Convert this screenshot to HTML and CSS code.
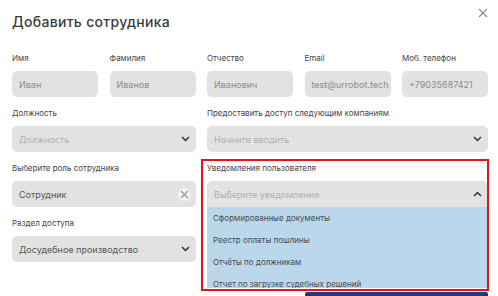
FILE: index.html
```html
<!DOCTYPE html>
<html lang="ru">
<head>
    <meta charset="UTF-8">
    <meta name="viewport" content="width=device-width, initial-scale=1.0">
    <link rel="stylesheet" href="styles.css">
    <title>Добавить сотрудника</title>
</head>
<body>
  <div class="modal">
    <div class="modal-header">
      <h1 class="modal-title">Добавить сотрудника</h1>
      <button class="close-btn" aria-label="Закрыть">
        <svg width="10" height="10" viewBox="0 0 10 10"><path d="M1 1L9 9M9 1L1 9" stroke="#8a8a8a" stroke-width="1.1" fill="none"/></svg>
      </button>
    </div>

    <form class="form-grid">
      <div class="field">
        <label class="field-label">Имя</label>
        <div class="control"><span class="value">Иван</span></div>
      </div>
      <div class="field">
        <label class="field-label">Фамилия</label>
        <div class="control"><span class="value">Иванов</span></div>
      </div>
      <div class="field">
        <label class="field-label">Отчество</label>
        <div class="control"><span class="value">Иванович</span></div>
      </div>
      <div class="field">
        <label class="field-label">Email</label>
        <div class="control"><span class="value">test@urrobot.tech</span></div>
      </div>
      <div class="field">
        <label class="field-label">Моб. телефон</label>
        <div class="control"><span class="value">+79035687421</span></div>
      </div>

      <div class="field span-2">
        <label class="field-label">Должность</label>
        <div class="control select"><span class="placeholder">Должность</span>
          <svg class="chevron" width="9" height="6" viewBox="0 0 9 6"><path d="M1 1L4.5 4.5L8 1" stroke="#333" stroke-width="1.5" fill="none"/></svg>
        </div>
      </div>
      <div class="field span-3">
        <label class="field-label">Предоставить доступ следующим компаниям</label>
        <div class="control select"><span class="placeholder">Начните вводить</span>
          <svg class="chevron" width="9" height="6" viewBox="0 0 9 6"><path d="M1 1L4.5 4.5L8 1" stroke="#333" stroke-width="1.5" fill="none"/></svg>
        </div>
      </div>

      <div class="field span-2">
        <label class="field-label">Выберите роль сотрудника</label>
        <div class="control select"><span class="selected">Сотрудник</span>
          <span class="clear-btn">
            <svg width="9" height="9" viewBox="0 0 9 9"><path d="M1 1L8 8M8 1L1 8" stroke="#9a9a9a" stroke-width="1.2" fill="none"/></svg>
          </span>
        </div>
      </div>
      <div class="field span-3 highlighted">
        <label class="field-label">Уведомления пользователя</label>
        <div class="control select open"><span class="placeholder">Выберите уведомления</span>
          <svg class="chevron" width="9" height="6" viewBox="0 0 9 6"><path d="M1 5L4.5 1.5L8 5" stroke="#333" stroke-width="1.5" fill="none"/></svg>
          <ul class="dropdown">
            <li>Сформированные документы</li>
            <li>Реестр оплаты пошлины</li>
            <li>Отчёты по должникам</li>
            <li>Отчет по загрузке судебных решений</li>
          </ul>
        </div>
      </div>

      <div class="field span-2">
        <label class="field-label">Раздел доступа</label>
        <div class="control select"><span class="selected">Досудебное производство</span>
          <svg class="chevron" width="9" height="6" viewBox="0 0 9 6"><path d="M1 1L4.5 4.5L8 1" stroke="#333" stroke-width="1.5" fill="none"/></svg>
        </div>
      </div>

      <!-- save button, only its top edge is in view -->
      <button type="button" class="save-btn" aria-label="Сохранить"></button>
    </form>
  </div>
</body>
</html>
```

FILE: styles.css
```css
html, body {
    height: 296px;
    overflow: hidden;
}

body {
    margin: 0;
    padding: 0;
    font-family: Inter, "Noto Sans", sans-serif;
    background-color: #fff;
    color: #333;
}

.modal {
    padding: 12px 10px 0 12px;
}

.modal-header {
    display: flex;
    justify-content: space-between;
    align-items: flex-start;
    margin-bottom: 21px;
}

.modal-title {
    margin: 0;
    font-size: 14px;
    line-height: 20px;
    font-weight: 500;
    letter-spacing: 0.3px;
    color: #3a3a3a;
}

.close-btn {
    border: none;
    background: none;
    padding: 0;
    margin: -6px 0 0 0;
    width: 10px;
    height: 10px;
    cursor: pointer;
}

.form-grid {
    display: grid;
    grid-template-columns: repeat(5, 86px);
    column-gap: 11.5px;
    row-gap: 11px;
}

.field {
    display: flex;
    flex-direction: column;
    position: relative;
}

.span-2 {
    grid-column: span 2;
}

.span-3 {
    grid-column: span 3;
}

.field-label {
    font-size: 8px;
    line-height: 10px;
    color: #444;
    margin-bottom: 8px;
    white-space: nowrap;
}

.control {
    position: relative;
    display: flex;
    align-items: center;
    height: 26px;
    padding: 0 6px 0 7px;
    background-color: #e2e2e2;
    border-radius: 5px;
    font-size: 9px;
}

.value {
    color: #8c8c8c;
}

.placeholder {
    color: #b0b0b0;
}

.selected {
    color: #555;
}

.select {
    justify-content: space-between;
}

.chevron {
    flex-shrink: 0;
}

.clear-btn {
    display: flex;
    justify-content: center;
    align-items: center;
    width: 13px;
    height: 13px;
    margin-right: -1px;
    border-radius: 50%;
    background-color: #f3f3f3;
}

.control.open {
    border-radius: 5px 5px 0 0;
}

.dropdown {
    position: absolute;
    top: 100%;
    left: 0;
    right: 0;
    height: 81px;
    overflow: hidden;
    margin: 0;
    padding: 0;
    list-style: none;
    background-color: #bad7eb;
    z-index: 5;
}

.dropdown li {
    height: 22px;
    line-height: 22px;
    padding-left: 6px;
    font-size: 8px;
    color: #4a4a4a;
}

.highlighted::after {
    content: "";
    position: absolute;
    top: -4px;
    left: -6px;
    right: -1px;
    height: 128px;
    border: 2px solid #e5141c;
    pointer-events: none;
    z-index: 10;
}

.save-btn {
    grid-row: 5;
    grid-column: 4 / span 2;
    margin-top: 19px;
    height: 30px;
    border: none;
    border-radius: 2px;
    background-color: #1c3a84;
}
```
